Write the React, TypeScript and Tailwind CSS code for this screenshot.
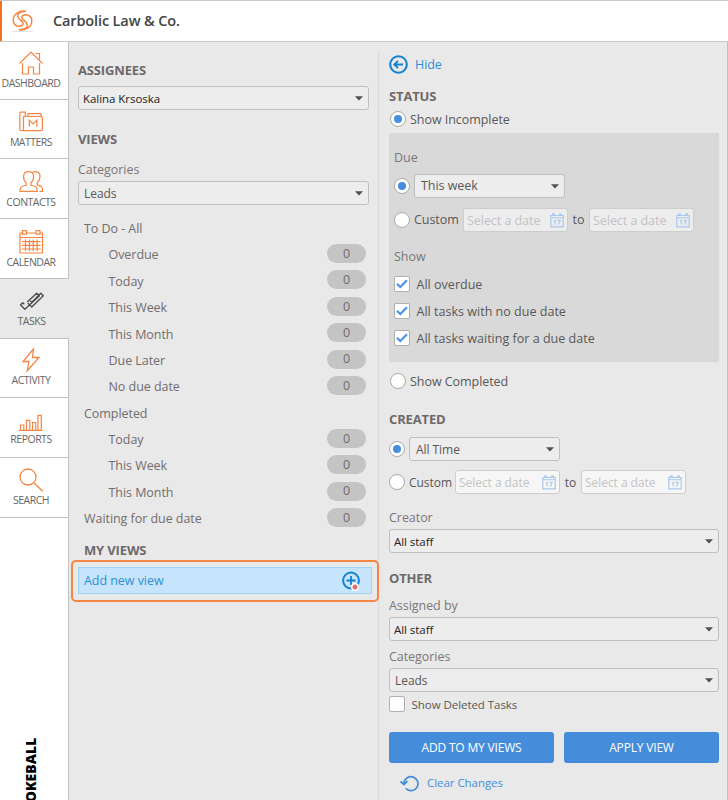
import type { ReactNode } from 'react';
import clsx from 'clsx';

const NAV = [
  { label: 'DASHBOARD', icon: <HomeIcon />, size: 'h-[58px]', pad: 'pt-[8px]' },
  { label: 'MATTERS', icon: <FolderIcon />, size: 'h-[59px]', pad: 'pt-[9px]' },
  { label: 'CONTACTS', icon: <PeopleIcon />, size: 'h-[60px]', pad: 'pt-[10px]' },
  { label: 'CALENDAR', icon: <CalendarIcon />, size: 'h-[60px]', pad: 'pt-[10px]' },
  { label: 'TASKS', icon: <TasksIcon />, size: 'h-[60px]', pad: 'pt-[9px]', active: true },
  { label: 'ACTIVITY', icon: <BoltIcon />, size: 'h-[59px]', pad: 'pt-[8px]' },
  { label: 'REPORTS', icon: <BarsIcon />, size: 'h-[60px]', pad: 'pt-[8px]' },
  { label: 'SEARCH', icon: <SearchIcon />, size: 'h-[60px]', pad: 'pt-[9px]' },
];

const VIEWS = [
  { label: 'To Do - All' },
  { label: 'Overdue', count: 0, nested: true },
  { label: 'Today', count: 0, nested: true },
  { label: 'This Week', count: 0, nested: true },
  { label: 'This Month', count: 0, nested: true },
  { label: 'Due Later', count: 0, nested: true },
  { label: 'No due date', count: 0, nested: true },
  { label: 'Completed' },
  { label: 'Today', count: 0, nested: true },
  { label: 'This Week', count: 0, nested: true },
  { label: 'This Month', count: 0, nested: true },
  { label: 'Waiting for due date', count: 0 },
];

function HomeIcon() {
  return (
    <svg width="26" height="26" viewBox="0 0 26 26" fill="none" stroke="#f58644" strokeWidth="1.2">
      <path d="M1.5 13.5 13 2l11.5 11.5M17.5 3.5h4v6.5" />
      <path d="M4.500 13v11h6v-7h5v7h6V13" />
    </svg>
  );
}

function FolderIcon() {
  return (
    <svg width="26" height="26" viewBox="0 0 26 26" fill="none" stroke="#f58644" strokeWidth="1.2">
      <path d="M5.500 21.700V7.500h17.500q1.400 0 1.400 1.400v11.400q0 1.400-1.400 1.400H3.200q-1.400 0-1.400-1.400V4.500q0-1.300 1.300-1.300h4.200v4M10 7.300V4.600h13v2.700" />
      <path d="M11.300 17.800v-6.600l3.800 3.800 3.800-3.800v6.600" />
    </svg>
  );
}

function PeopleIcon() {
  return (
    <svg width="26" height="26" viewBox="0 0 26 26" fill="none" stroke="#f58644" strokeWidth="1.2">
      <path d="M2 22.400c0-5 1.200-4.800 6.200-6.300v-2.300C5.800 11.600 5.400 9.800 5.600 7.300 5.800 4 7.800 2.700 10.600 2.700s4.800 1.300 5 4.600c.2 2.500-.2 4.300-2.600 6.500v2.300c5 1.500 6.200 1.300 6.200 6.300z" />
      <path d="M14.500 3.200c4.500-1.600 7.800.4 7.500 4.900-.2 2.300-.6 3.700-2.800 5.600v2.200c4.600 1.400 5.500 1.800 5.500 6.500H21.500" />
    </svg>
  );
}

function CalendarIcon() {
  return (
    <svg width="26" height="26" viewBox="0 0 26 26" fill="none" stroke="#f58644" strokeWidth="1.2">
      <path d="M4.500 4H2v20h22.500V4H22M8.500 4H18M2 8.500h22.500" />
      <path d="M4.500 1.600h4v3.600h-4zM18 1.600h4v3.600h-4zM7.500 10.500v11.500M11.400 10.500v11.500M15.300 10.500v11.500M19.200 10.500v11.500M4 12.600h18.500M4 16.300h18.500M4 20h18.500" />
    </svg>
  );
}

function TasksIcon() {
  return (
    <svg width="26" height="26" viewBox="0 0 26 26" fill="none" stroke="#4a4a4a" strokeWidth="1.3" strokeLinejoin="round">
      <path d="m5.300 16.200-1.500-1.500-2.300 2 4.300 4.500L20.500 7.800 17.700 5.300 8.200 14" />
      <path d="m8.800 15 4 4L24.300 7.700l-2.500-2.500-9 9-1.600-1.600" />
    </svg>
  );
}

function BoltIcon() {
  return (
    <svg width="26" height="26" viewBox="0 0 26 26" fill="none" stroke="#f58644" strokeWidth="1.3">
      <path d="M15.500 2 5 14.500h6L9.300 23.700 21 10.500h-6.500z" />
    </svg>
  );
}

function BarsIcon() {
  return (
    <svg width="26" height="26" viewBox="0 0 26 26" fill="none" stroke="#f58644" strokeWidth="1.200">
      <path d="M1 24.300h23.500M2.500 24v-5h3.300v5M8.500 24V14.300h3.300V24M14.500 24v-7.500h3.200V24M20 24V9.300h3.300V24" />
    </svg>
  );
}

function SearchIcon() {
  return (
    <svg width="26" height="26" viewBox="0 0 26 26" fill="none" stroke="#f58644" strokeWidth="1.3">
      <circle cx="10" cy="10" r="8" />
      <path d="m15.700 15.700 9 8.600" />
    </svg>
  );
}

function Logo() {
  const half = 'M14 1.300C7 .200 1.200 4.200 1.200 10.300c0 3.700 3 6.400 6.800 6 3.400-.5 4-3.200 2-4.900-2.400-1.900-4.600-3-4.400-5.900C5.800 3 9 1.600 14 1.300z';
  return (
    <svg width="21" height="21" viewBox="0 0 21 21" fill="none" stroke="#f58644" strokeWidth="1.500">
      <path d={half} />
      <path d={half} transform="rotate(180 10.500 10.500)" />
    </svg>
  );
}

function DateIcon() {
  return (
    <svg width="14" height="15" viewBox="0 0 14 15" fill="none" stroke="#a9c9ee" className="shrink-0">
      <path d="M.8 2.500h12.400v11.300H.8z" strokeWidth="1.200" />
      <path d="M1 4.700h12" strokeWidth="1" />
      <path d="M2 1.700h3M9 1.700h3" strokeWidth="2.600" />
      <path d="m4 8.200 1.200-.8v4M7.300 7.300h2.900l-1.700 4.200" strokeWidth="1.200" />
    </svg>
  );
}

function Heading({ className, children }: { className?: string; children: ReactNode }) {
  return (
    <h2 className={clsx('flex items-center text-[13px] font-bold tracking-[-0.15px] text-[#6e6969]', className)}>
      {children}
    </h2>
  );
}

function Label({ className, children }: { className?: string; children: ReactNode }) {
  return <div className={clsx('flex h-5 items-center pt-[2px] text-[#7b7777]', className)}>{children}</div>;
}

function Select({ value, className }: { value: string; className?: string }) {
  return (
    <button
      className={clsx(
        'flex h-6 shrink-0 items-center justify-between rounded-[3px] border border-[#c0c0c0] bg-[#ededed] pr-[5px] text-left',
        className,
      )}
    >
      <span className="pt-px">{value}</span>
      <svg width="8" height="5" viewBox="0 0 8 5" fill="#505050">
        <path d="M0 .3h8L4 4.600z" />
      </svg>
    </button>
  );
}

function Radio({ checked }: { checked?: boolean }) {
  return (
    <span className="flex size-4 shrink-0 items-center justify-center rounded-full border border-[#aaa] bg-white">
      {checked && <span className="size-2 rounded-full bg-[#458ee0]" />}
    </span>
  );
}

function Checkbox({ checked }: { checked?: boolean }) {
  return (
    <span className="flex size-4 shrink-0 items-center justify-center rounded-[2px] border border-[#b0b0b0] bg-white">
      {checked && (
        <svg width="12" height="10" viewBox="0 0 12 10" fill="none" stroke="#4a93ea" strokeWidth="2.200">
          <path d="m1 4.800 3.300 3.200L11 1.300" />
        </svg>
      )}
    </span>
  );
}

function DateInput({ className }: { className: string }) {
  return (
    <div className={clsx('flex h-6 w-[105px] items-center justify-between rounded-[3px] border border-[#cdcdcd] pr-[3px] pl-[3px] text-[#c3c3c3]', className)}>
      <span className="pt-[2px]">Select a date</span>
      <DateIcon />
    </div>
  );
}

export default function App() {
  return (
    <div className="flex h-[800px] w-[728px] flex-col overflow-hidden bg-white font-['Open_Sans','Segoe_UI',sans-serif] text-[12.500px] leading-none tracking-[-0.050px] whitespace-nowrap text-[#5a5757]">
      <header className="flex h-[42px] shrink-0 items-center border-t border-b border-[#c9c9c9]">
        <div className="h-full w-[2px] bg-[#f26f21]" />
        <div className="ml-[10px] border-b border-[#e4e4e4]"><Logo /></div>
        <h1 className="ml-[20px] text-[14.500px] font-semibold tracking-[-0.130px] text-[#444]">Carbolic Law &amp; Co.</h1>
      </header>

      <div className="flex min-h-0 flex-1">
        {/* Main navigation */}
        <nav className="flex w-[69px] shrink-0 flex-col">
          {NAV.map(item => (
            <div
              key={item.label}
              className={clsx(
                'flex shrink-0 flex-col items-center border-b border-[#c2c2c2] pr-[6px]',
                item.size,
                item.pad,
                item.active ? 'bg-[#e9e9e9]' : 'border-r bg-white',
              )}
            >
              {item.icon}
              <span className="mt-[2px] text-[10.500px] tracking-[-0.500px] text-[#666]">{item.label}</span>
            </div>
          ))}
          <div className="flex flex-1 items-start border-r border-[#c2c2c2] pt-[220px] pl-[23px]">
            <span className="h-[100px] rotate-180 text-right text-[14px] leading-[16px] font-extrabold tracking-[0.050px] text-black [writing-mode:vertical-rl]">SMOKEBALL</span>
          </div>
        </nav>

        {/* Views */}
        <section className="flex w-[309px] shrink-0 flex-col bg-[#e9e9e9] pl-[9px]">
          <Heading className="mt-[18px] h-5">ASSIGNEES</Heading>
          <Select value="Kalina Krsoska" className="mt-[6px] w-[291px] pl-1 text-[11.500px] text-[#222]" />
          <Heading className="mt-[19px] h-5">VIEWS</Heading>
          <Label className="mt-[10px]">Categories</Label>
          <Select value="Leads" className="mt-[2px] w-[291px] pl-[5px] text-[12px]" />

          <ul className="mt-[10px] w-[288px]">
            {VIEWS.map((view, i) => (
              <li
                key={i}
                className={clsx(
                  'flex h-[26.400px] items-center justify-between text-[#716d6d]',
                  view.nested ? 'pl-[30.500px]' : 'pl-[6px]',
                )}
              >
                <span className="pt-[2px]">{view.label}</span>
                {view.count !== undefined && (
                  <span className="mb-[2px] flex h-[19px] w-[39px] items-center justify-center rounded-full bg-[#c4c4c4] pt-px">{view.count}</span>
                )}
              </li>
            ))}
          </ul>

          <Heading className="mt-[9px] h-5 pl-[6px]">MY VIEWS</Heading>
          <div className="relative z-10 mt-[-1px] -ml-[7px] flex h-[42px] w-[308px] shrink-0 items-center rounded-[5px] border-2 border-[#f58644] px-[5px]">
            <button className="flex h-[27px] w-full items-center justify-between border border-[#9bd5fb] bg-[#c6e5fc] pr-[9px] pl-[5px] text-[#2b8fd6]">
              <span className="pt-[2px]">Add new view</span>
              <svg width="20" height="20" viewBox="0 0 20 20" fill="none" stroke="#1582d0">
                <circle cx="9" cy="9.500" r="7.900" strokeWidth="2" />
                <path d="M9 5v9M4.500 9.500h9" strokeWidth="1.800" />
                <circle cx="13" cy="16" r="4" fill="#fff" stroke="none" />
                <circle cx="13" cy="16" r="2.500" fill="#e66e6b" stroke="none" />
              </svg>
            </button>
          </div>
        </section>

        {/* Filters */}
        <section className="flex flex-1 border-r border-[#c2c2c2] bg-[#e9e9e9]">
          <div className="mt-[9px] w-px shrink-0 bg-[#dadada]" />
          <div className="ml-[10px] flex w-[330px] shrink-0 flex-col">
            <button className="mt-[12px] flex h-5 items-center gap-[7px] text-[#2b8fd6]">
              <svg width="19" height="19" viewBox="0 0 19 19" fill="none" stroke="#1582d0">
                <circle cx="9.500" cy="9.500" r="8.300" strokeWidth="2.100" />
                <path d="M14 9.500H5.500M9 5.800 5.300 9.500 9 13.200" strokeWidth="1.900" />
              </svg>
              <span className="pt-[2px]">Hide</span>
            </button>
            <Heading className="mt-[12px] h-5">STATUS</Heading>
            <label className="mt-[3px] flex h-5 items-center gap-1 pl-px">
              <Radio checked />
              <span className="pt-[2px]">Show Incomplete</span>
            </label>

            <div className="mt-[4px] flex h-[229px] flex-col bg-[#d9d9d9] pl-[5px]">
              <Label className="mt-[14px]">Due</Label>
              <div className="mt-[7px] flex h-6 items-center gap-1">
                <Radio checked />
                <Select value="This week" className="w-[151px] pl-[6px] text-[12.500px]" />
              </div>
              <div className="mt-[10px] flex h-6 items-center">
                <Radio />
                <span className="ml-1 w-[49px] pt-px">Custom</span>
                <DateInput className="bg-[#ededed]" />
                <span className="w-[21px] pt-px text-center">to</span>
                <DateInput className="bg-[#ededed]" />
              </div>
              <Label className="mt-[14px]">Show</Label>
              <label className="mt-[8px] flex h-5 items-center gap-[6.500px] tracking-[0.020px]"><Checkbox checked /><span className="pt-[2px]">All overdue</span></label>
              <label className="mt-[7px] flex h-5 items-center gap-[6.500px] tracking-[0.020px]"><Checkbox checked /><span className="pt-[2px]">All tasks with no due date</span></label>
              <label className="mt-[7px] flex h-5 items-center gap-[6.500px] tracking-[0.020px]"><Checkbox checked /><span className="pt-[2px]">All tasks waiting for a due date</span></label>
            </div>

            <label className="mt-[9px] flex h-5 items-center gap-1 pl-px">
              <Radio />
              <span className="pt-[2px]">Show Completed</span>
            </label>
            <Heading className="mt-[18px] h-5">CREATED</Heading>
            <div className="mt-[8px] flex h-6 items-center gap-1">
              <Radio checked />
              <Select value="All Time" className="w-[151px] pl-[6px] text-[12px]" />
            </div>
            <div className="mt-[9px] flex h-6 items-center text-[12px]">
              <Radio />
              <span className="ml-1 w-[46px] pt-px">Custom</span>
              <DateInput className="bg-[#f6f6f6]" />
              <span className="w-[21px] pt-px text-center">to</span>
              <DateInput className="bg-[#f6f6f6]" />
            </div>
            <Label className="mt-[13px]">Creator</Label>
            <Select value="All staff" className="mt-[2px] w-full pl-1 text-[11.500px] text-[#222]" />
            <Heading className="mt-[15px] h-5">OTHER</Heading>
            <Label className="mt-[7px]">Assigned by</Label>
            <Select value="All staff" className="mt-[2px] w-full pl-1 text-[11.500px] text-[#222]" />
            <Label className="mt-[5px]">Categories</Label>
            <Select value="Leads" className="mt-[2px] w-full pl-[5px] text-[12px]" />
            <label className="mt-[2px] flex h-5 items-center gap-[6.500px] text-[11.500px]">
              <Checkbox />
              <span className="pt-px">Show Deleted Tasks</span>
            </label>
            <div className="mt-[18px] flex gap-[10px] text-[12px] tracking-[-0.180px] text-white">
              <button className="h-[31px] w-[165px] rounded-[3px] bg-[#458ddb]">ADD TO MY VIEWS</button>
              <button className="h-[31px] flex-1 rounded-[3px] bg-[#458ddb]">APPLY VIEW</button>
            </div>
            <button className="mt-[10px] flex h-5 items-center gap-[8px] pl-[11px] text-[11.500px] text-[#458ddb]">
              <svg width="19" height="17" viewBox="0 0 19 17" fill="none" stroke="#458ddb" strokeWidth="1.700">
                <path d="M5.700 13.300A7 7 0 1 0 4 8v1.500M.5 6.500l3.500 3 3.500-3.300" />
              </svg>
              Clear Changes
            </button>
          </div>
        </section>
      </div>
    </div>
  );
}
